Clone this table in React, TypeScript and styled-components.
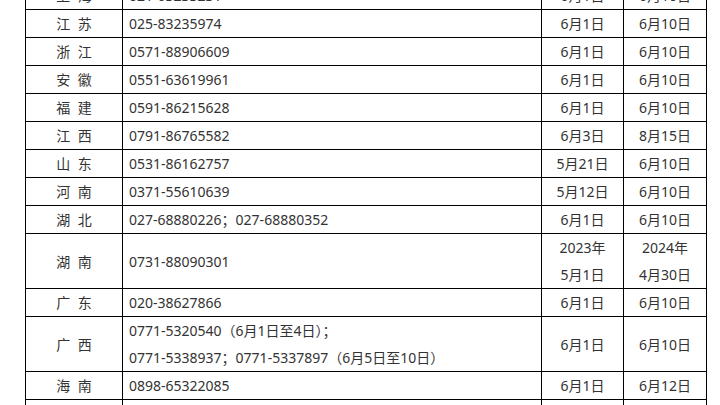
import React from "react";
import styled, { createGlobalStyle } from "styled-components";

const GlobalStyle = createGlobalStyle`
  html, body {
    margin: 0;
    padding: 0;
    background: #fff;
    overflow: hidden;
    height: 405px;
  }
`;

const Page = styled.div`
  width: 720px;
  height: 405px;
  overflow: hidden;
  padding-left: 25px;
  box-sizing: border-box;
`;

const Table = styled.table`
  width: 681px;
  margin-top: -19px;
  border-collapse: collapse;
  table-layout: fixed;
  font-family: "Noto Sans", "Noto Sans CJK SC", sans-serif;
  font-size: 14px;
  color: #333;

  td {
    border: 1px solid #000;
    padding: 0;
    line-height: 27px;
    vertical-align: middle;
  }
`;

const Col = styled.col<{ $w: number }>`
  width: ${(p) => p.$w}px;
`;

const NameCell = styled.td`
  text-align: center;
  word-spacing: 4px;
`;

const PhoneCell = styled.td`
  text-align: left;
  padding-left: 6px !important;
  white-space: nowrap;
`;

const DateCell = styled.td`
  text-align: center;
`;

type Row = {
  name: string;
  phone: React.ReactNode;
  start: React.ReactNode;
  end: React.ReactNode;
};

const rows: Row[] = [
  { name: "上 海", phone: "021-63233231", start: "6月1日", end: "6月10日" },
  { name: "江 苏", phone: "025-83235974", start: "6月1日", end: "6月10日" },
  { name: "浙 江", phone: "0571-88906609", start: "6月1日", end: "6月10日" },
  { name: "安 徽", phone: "0551-63619961", start: "6月1日", end: "6月10日" },
  { name: "福 建", phone: "0591-86215628", start: "6月1日", end: "6月10日" },
  { name: "江 西", phone: "0791-86765582", start: "6月3日", end: "8月15日" },
  { name: "山 东", phone: "0531-86162757", start: "5月21日", end: "6月10日" },
  { name: "河 南", phone: "0371-55610639", start: "5月12日", end: "6月10日" },
  { name: "湖 北", phone: "027-68880226；027-68880352", start: "6月1日", end: "6月10日" },
  {
    name: "湖 南",
    phone: "0731-88090301",
    start: (
      <>
        2023年
        <br />
        5月1日
      </>
    ),
    end: (
      <>
        2024年
        <br />
        4月30日
      </>
    ),
  },
  { name: "广 东", phone: "020-38627866", start: "6月1日", end: "6月10日" },
  {
    name: "广 西",
    phone: (
      <>
        0771-5320540（6月1日至4日）；
        <br />
        0771-5338937；0771-5337897（6月5日至10日）
      </>
    ),
    start: "6月1日",
    end: "6月10日",
  },
  { name: "海 南", phone: "0898-65322085", start: "6月1日", end: "6月12日" },
  { name: "重 庆", phone: "023-63854252", start: "6月1日", end: "6月10日" },
];

export default function App() {
  return (
    <>
      <GlobalStyle />
      <Page>
        <Table>
          <colgroup>
            <Col $w={97} />
            <Col $w={419} />
            <Col $w={82} />
            <Col $w={83} />
          </colgroup>
          <tbody>
            {rows.map((r) => (
              <tr key={r.name}>
                <NameCell>{r.name}</NameCell>
                <PhoneCell>{r.phone}</PhoneCell>
                <DateCell>{r.start}</DateCell>
                <DateCell>{r.end}</DateCell>
              </tr>
            ))}
          </tbody>
        </Table>
      </Page>
    </>
  );
}
